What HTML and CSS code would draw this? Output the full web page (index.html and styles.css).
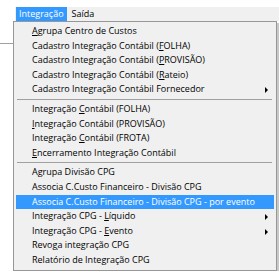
FILE: index.html
```html
<!DOCTYPE html>
<html lang="pt-BR">
<head>
  <meta charset="UTF-8" />
  <title>Menu Integração</title>
  <link rel="stylesheet" href="styles.css">
</head>
<body>
  <div class="bg-line"></div>

  <div class="menubar">
    <span class="top-item active">Integração</span>
    <span class="top-item">Saída</span>
  </div>

  <div class="dropdown">
    <div class="item"><u>A</u>grupa Centro de Custos</div>
    <div class="item">Cadastro Integração Contábil (<u>F</u>OLHA)</div>
    <div class="item">Cadastro Integração Contábil (<u>P</u>ROVISÃO)</div>
    <div class="item">Cadastro Integração Contábil (<u>R</u>ateio)</div>
    <div class="item sub">Cadastro Integração Contábil Fornecedor</div>
    <div class="sep"></div>
    <div class="item">Integração <u>C</u>ontábil (FOLHA)</div>
    <div class="item"><u>I</u>ntegração Contábil (PROVISÃO)</div>
    <div class="item">Integração <u>C</u>ontábil (FROTA)</div>
    <div class="item"><u>E</u>ncerramento Integração Contábil</div>
    <div class="sep"></div>
    <div class="item">Agrupa Divisão CPG</div>
    <div class="item">Associa C.Custo Financeiro - Divisão CPG</div>
    <div class="item selected">Associa C.Custo Financeiro - Divisão CPG - por evento</div>
    <div class="item sub">Integração CPG - <u>L</u>íquido</div>
    <div class="item sub">Integração CPG - <u>E</u>vento</div>
    <div class="item">Revo<u>g</u>a integração CPG</div>
    <div class="item">Relatório de Integração CPG</div>
  </div>
</body>
</html>
```

FILE: styles.css
```css
body {
  margin: 0;
  background: #ffffff;
  font-family: "Open Sans", "Noto Sans", sans-serif;
  font-size: 9px;
  color: #000000;
  position: relative;
  overflow: hidden;
}

.bg-line {
  position: absolute;
  left: 0;
  right: 0;
  top: 43px;
  height: 1px;
  background: #a0a0a0;
}

.menubar {
  margin-top: 7px;
  margin-left: 15px;
  height: 14px;
  background: #f0f0f0;
  display: flex;
  align-items: stretch;
  position: relative;
}

.top-item {
  padding: 0 3px;
  margin-right: 2px;
  line-height: 13px;
}

.top-item.active {
  background: #3399ff;
  color: #ffffff;
  margin-left: 1px;
}

.dropdown {
  margin-left: 13px;
  width: 258px;
  background: #f0f0f0;
  border: 1px solid #979797;
  box-shadow: 2px 2px 0 #c8c8c8;
  padding: 2px;
  position: relative;
}

.item {
  height: 14.6px;
  line-height: 14.6px;
  padding-left: 16px;
  white-space: nowrap;
  position: relative;
}

.item.selected {
  background: #3399ff;
  color: #ffffff;
}

.item.sub::after {
  content: "";
  position: absolute;
  right: 6px;
  top: 5px;
  border-left: 3px solid #000000;
  border-top: 3px solid transparent;
  border-bottom: 3px solid transparent;
}

.sep {
  height: 1px;
  margin: 2px 2px 2px 1px;
  background: #a0a0a0;
}
```
